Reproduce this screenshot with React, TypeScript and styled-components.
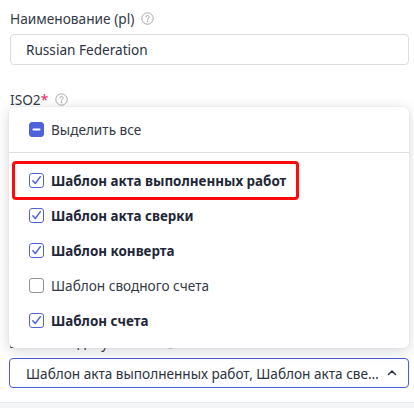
import React from "react";
import styled, { createGlobalStyle, css } from "styled-components";

const Global = createGlobalStyle`
  html, body { margin: 0; padding: 0; background: #ffffff; }
  body { font-family: "Noto Sans", "Open Sans", sans-serif; color: #333a45; }
  * { box-sizing: border-box; }
`;

const Page = styled.div`
  width: 414px;
  height: 408px;
  overflow: hidden;
  display: flex;
  flex-direction: column;
`;

const Form = styled.div`
  display: flex;
  flex-direction: column;
  gap: 24px;
  padding: 8px 5px 0 10px;
`;

const Field = styled.div<{ $shift?: number }>`
  display: flex;
  flex-direction: column;
  gap: 6px;
  margin-left: ${(p) => p.$shift ?? 0}px;
`;

const Label = styled.div`
  height: 20px;
  display: flex;
  align-items: center;
  gap: 7px;
  font-size: 13.7px;
  color: #333a45;
`;

const Req = styled.span`
  color: #e5285f;
  margin-left: -7px;
`;

const Help = styled.span`
  display: inline-flex;
  color: #a3a6ab;
`;

const Input = styled.div`
  height: 31px;
  border: 1px solid #dcdde0;
  border-radius: 4px;
  padding: 0 15px;
  display: flex;
  align-items: center;
  font-size: 13.6px;
  color: #2b3340;
`;

const SelectWrap = styled.div`
  position: relative;
`;

const Select = styled.div`
  height: 30px;
  border: 1px solid #4a5cd6;
  border-radius: 4px;
  padding: 0 11px 0 16px;
  display: flex;
  align-items: center;
  gap: 6px;
  font-size: 13.6px;
  color: #2b3340;
`;

const SelectText = styled.span`
  flex: 1;
  min-width: 0;
  white-space: nowrap;
  overflow: hidden;
  text-overflow: ellipsis;
`;

const Panel = styled.div`
  position: absolute;
  left: 0;
  right: 0;
  bottom: calc(100% + 10px);
  background: #ffffff;
  border-radius: 6px;
  box-shadow: 0 3px 14px rgba(30, 35, 50, 0.18), 0 0 2px rgba(30, 35, 50, 0.08);
  display: flex;
  flex-direction: column;
  z-index: 5;
`;

const AllRow = styled.div`
  height: 46px;
  display: flex;
  align-items: center;
  gap: 7px;
  padding-left: 20px;
  font-size: 13.6px;
  color: #333a45;
  border-bottom: 1px solid #dedfe2;
`;

const List = styled.div`
  display: flex;
  flex-direction: column;
  padding: 10px 0;
`;

const Item = styled.div`
  height: 35px;
  display: flex;
  align-items: center;
  padding-left: 20px;
`;

const ItemInner = styled.div<{ $checked: boolean; $highlight?: boolean }>`
  position: relative;
  display: inline-flex;
  align-items: center;
  gap: 7px;
  font-size: ${(p) => (p.$checked ? "13.4px" : "13.6px")};
  font-weight: ${(p) => (p.$checked ? 700 : 400)};
  color: ${(p) => (p.$checked ? "#1e2738" : "#333a45")};
  ${(p) =>
    p.$highlight &&
    css`
      &::before {
        content: "";
        position: absolute;
        left: -17px;
        right: -13px;
        top: -11px;
        bottom: -10px;
        border: 3px solid #ff0a0a;
        border-radius: 4px;
      }
    `}
`;

const Box = styled.span<{ $state: "on" | "off" | "mixed" }>`
  width: 15px;
  height: 15px;
  flex: none;
  border-radius: 3px;
  display: inline-flex;
  align-items: center;
  justify-content: center;
  ${(p) =>
    p.$state === "mixed"
      ? css`
          background: #4f63d8;
          border: 1px solid #4f63d8;
        `
      : p.$state === "on"
      ? css`
          background: #fff;
          border: 1.4px solid #4f63d8;
        `
      : css`
          background: #fff;
          border: 1.2px solid #8f9296;
        `}
`;

const Footer = styled.div`
  margin-top: auto;
  height: 6px;
  background: #f4f5f6;
  border-top: 1px solid #e9eaec;
`;

const HelpIcon = () => (
  <Help>
    <svg width="13" height="13" viewBox="0 0 16 16" fill="none" stroke="currentColor" strokeWidth="1.2">
      <circle cx="8" cy="8" r="7" />
      <path d="M6 6.2a2 2 0 1 1 2.7 1.9c-.5.2-.7.6-.7 1.1v.6" strokeLinecap="round" />
      <circle cx="8" cy="11.6" r="0.5" fill="currentColor" />
    </svg>
  </Help>
);

const Check = ({ state }: { state: "on" | "off" | "mixed" }) => (
  <Box $state={state}>
    {state === "on" && (
      <svg width="11" height="11" viewBox="0 0 12 12" fill="none">
        <path d="M2 6.3l2.7 3L10.2 1.8" stroke="#4f63d8" strokeWidth="1.6" strokeLinecap="round" strokeLinejoin="round" />
      </svg>
    )}
    {state === "mixed" && (
      <svg width="9" height="9" viewBox="0 0 10 10">
        <path d="M1.5 5h7" stroke="#fff" strokeWidth="2" strokeLinecap="round" />
      </svg>
    )}
  </Box>
);

const ChevronUp = () => (
  <svg width="10" height="8" viewBox="0 0 10 8" fill="none">
    <path d="M1.5 5.5L5 2l3.5 3.5" stroke="#2b3340" strokeWidth="1.5" strokeLinecap="round" strokeLinejoin="round" />
  </svg>
);

const items = [
  { label: "Шаблон акта выполненных работ", checked: true, highlight: true },
  { label: "Шаблон акта сверки", checked: true },
  { label: "Шаблон конверта", checked: true },
  { label: "Шаблон сводного счета", checked: false },
  { label: "Шаблон счета", checked: true },
];

export default function App() {
  return (
    <Page>
      <Global />
      <Form>
        <Field>
          <Label>
            Наименование (pl) <HelpIcon />
          </Label>
          <Input>Russian Federation</Input>
        </Field>
        <Field>
          <Label>
            ISO2<Req>*</Req> <HelpIcon />
          </Label>
          <Input>RU</Input>
        </Field>
        <Field>
          <Label>
            ISO3<Req>*</Req> <HelpIcon />
          </Label>
          <Input>RUS</Input>
        </Field>
        <Field>
          <Label>
            Код <HelpIcon />
          </Label>
          <Input>643</Input>
        </Field>
        <Field $shift={-1}>
          <Label>
            Шаблоны документов <HelpIcon />
          </Label>
          <SelectWrap>
            <Panel>
              <AllRow>
                <Check state="mixed" />
                Выделить все
              </AllRow>
              <List>
                {items.map((it) => (
                  <Item key={it.label}>
                    <ItemInner $checked={it.checked} $highlight={it.highlight}>
                      <Check state={it.checked ? "on" : "off"} />
                      {it.label}
                    </ItemInner>
                  </Item>
                ))}
              </List>
            </Panel>
            <Select>
              <SelectText>
                Шаблон акта выполненных работ, Шаблон акта сверки, Шаблон конверта, Шаблон счета
              </SelectText>
              <ChevronUp />
            </Select>
          </SelectWrap>
        </Field>
      </Form>
      <Footer />
    </Page>
  );
}
